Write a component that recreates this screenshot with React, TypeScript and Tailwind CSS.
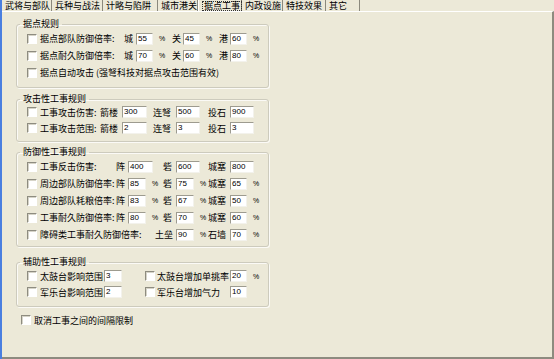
import React from "react";

const tabs = [
  { name: "武将与部队", w: "w-[50px]" },
  { name: "兵种与战法", w: "w-[51px]" },
  { name: "计略与陷阱", w: "w-[55px]" },
  { name: "城市港关", w: "w-[40px]" },
  { name: "据点工事", w: "w-[44px]", active: true },
  { name: "内政设施", w: "w-[41px]" },
  { name: "特技效果", w: "w-[43px]" },
  { name: "其它", w: "w-[34px]" },
];

const Check = ({ className = "" }: { className?: string }) => (
  <span
    className={`block h-[10px] w-[10px] shrink-0 border border-b-white border-l-[#8e8c80] border-r-white border-t-[#8e8c80] bg-white shadow-[inset_1px_1px_0_#d6d4c8] ${className}`}
  />
);

const Field = ({ value, w }: { value: string; w: string }) => (
  <span
    className={`flex h-[12px] shrink-0 items-center border border-b-[#f3f2ec] border-l-[#9d9b8f] border-r-[#f3f2ec] border-t-[#9d9b8f] bg-white pl-[1px] font-['Liberation_Sans',sans-serif] text-[8px] leading-none ${w}`}
  >
    {value}
  </span>
);

const Pct = ({ w = "w-[19px]" }: { w?: string }) => (
  <span className={`shrink-0 pl-[6px] font-['Liberation_Sans',sans-serif] text-[7px] ${w}`}>%</span>
);

const Txt = ({ children, w }: { children: React.ReactNode; w: string }) => (
  <span className={`shrink-0 whitespace-nowrap ${w}`}>{children}</span>
);

const Group = ({ title, className = "", children }: { title: string; className?: string; children: React.ReactNode }) => (
  <fieldset
    className={`w-[253px] rounded-[3px] border border-[#cdcbbd] shadow-[inset_1px_1px_0_#fbfaf6,1px_1px_0_#fbfaf6] ${className}`}
  >
    <legend className="ml-[3px] px-[3px] text-[9px] leading-[10px]">{title}</legend>
    <div className="pl-[10px]">{children}</div>
  </fieldset>
);

const Row = ({ h = "h-[17px]", children }: { h?: string; children: React.ReactNode }) => (
  <div className={`flex items-center ${h}`}>{children}</div>
);

export default function App() {
  return (
    <div className="flex h-[359px] w-[554px] flex-col overflow-hidden border-l-2 border-[#4a7fe0] bg-[#ece9d8] font-['Noto_Sans_CJK_SC','Noto_Sans',sans-serif] text-[9px] leading-none text-black">
      {/* tab strip */}
      <div className="flex h-[11px] items-stretch">
        {tabs.map((t) => (
          <div
            key={t.name}
            className={`flex ${t.w} items-center whitespace-nowrap pl-[3px] ${
              t.active
                ? "border-l border-r border-l-white border-r-[#716f64] bg-[#ece9d8]"
                : "border-r border-r-[#8b897d]"
            }`}
          >
            {t.active ? (
              <span className="border border-dotted border-[#333] px-[1px] leading-[8px]">{t.name}</span>
            ) : (
              t.name
            )}
          </div>
        ))}
      </div>

      {/* page */}
      <div className="flex flex-1 flex-col border-b-2 border-r-2 border-t border-b-[#8d8b7f] border-r-[#8d8b7f] border-t-white pl-[14px]">
        <Group title="据点规则" className="mt-[7px]">
          <div className="pb-[6px] pt-[1px]">
            <Row>
              <Check />
              <Txt w="ml-[3px] w-[84px]">据点部队防御倍率:</Txt>
              <Txt w="w-[12px]">城</Txt>
              <Field value="55" w="w-[17px]" />
              <Pct />
              <Txt w="w-[11px]">关</Txt>
              <Field value="45" w="w-[17px]" />
              <Pct />
              <Txt w="w-[11px]">港</Txt>
              <Field value="60" w="w-[17px]" />
              <Pct />
            </Row>
            <Row>
              <Check />
              <Txt w="ml-[3px] w-[84px]">据点耐久防御倍率:</Txt>
              <Txt w="w-[12px]">城</Txt>
              <Field value="70" w="w-[17px]" />
              <Pct />
              <Txt w="w-[11px]">关</Txt>
              <Field value="60" w="w-[17px]" />
              <Pct />
              <Txt w="w-[11px]">港</Txt>
              <Field value="80" w="w-[17px]" />
              <Pct />
            </Row>
            <Row>
              <Check />
              <Txt w="ml-[3px]">据点自动攻击 (强弩科技对据点攻击范围有效)</Txt>
            </Row>
          </div>
        </Group>

        <Group title="攻击性工事规则" className="mt-[6px]">
          <div className="pb-[5px]">
            {[
              { label: "工事攻击伤害:", a: "300", b: "500", c: "900" },
              { label: "工事攻击范围:", a: "2", b: "3", c: "3" },
            ].map((r) => (
              <Row key={r.label} h="h-[16px]">
                <Check />
                <Txt w="ml-[3px] w-[60px]">{r.label}</Txt>
                <Txt w="w-[22px]">箭楼</Txt>
                <Field value={r.a} w="w-[25px]" />
                <span className="w-[6px] shrink-0" />
                <Txt w="w-[23px]">连弩</Txt>
                <Field value={r.b} w="w-[24px]" />
                <span className="w-[8px] shrink-0" />
                <Txt w="w-[22px]">投石</Txt>
                <Field value={r.c} w="w-[24px]" />
              </Row>
            ))}
          </div>
        </Group>

        <Group title="防御性工事规则" className="mt-[5px]">
          <div className="pb-[3px] pt-[1px]">
            <Row>
              <Check />
              <Txt w="ml-[3px] w-[76px]">工事反击伤害:</Txt>
              <Txt w="w-[12px]">阵</Txt>
              <Field value="400" w="w-[25px]" />
              <span className="w-[10px] shrink-0" />
              <Txt w="w-[13px]">砦</Txt>
              <Field value="600" w="w-[24px]" />
              <span className="w-[8px] shrink-0" />
              <Txt w="w-[22px]">城塞</Txt>
              <Field value="800" w="w-[24px]" />
            </Row>
            {[
              { label: "周边部队防御倍率:", a: "85", b: "75", c: "65" },
              { label: "周边部队耗粮倍率:", a: "83", b: "67", c: "50" },
              { label: "工事耐久防御倍率:", a: "80", b: "70", c: "60" },
            ].map((r) => (
              <Row key={r.label}>
                <Check />
                <Txt w="ml-[3px] w-[76px]">{r.label}</Txt>
                <Txt w="w-[12px]">阵</Txt>
                <Field value={r.a} w="w-[18px]" />
                <Pct w="w-[17px]" />
                <Txt w="w-[13px]">砦</Txt>
                <Field value={r.b} w="w-[18px]" />
                <Pct w="w-[14px]" />
                <Txt w="w-[22px]">城塞</Txt>
                <Field value={r.c} w="w-[17px]" />
                <Pct />
              </Row>
            ))}
            <Row>
              <Check />
              <Txt w="ml-[3px] w-[115px]">障碍类工事耐久防御倍率:</Txt>
              <Txt w="w-[21px]">土垒</Txt>
              <Field value="90" w="w-[18px]" />
              <Pct w="w-[14px]" />
              <Txt w="w-[22px]">石墙</Txt>
              <Field value="70" w="w-[17px]" />
              <Pct />
            </Row>
          </div>
        </Group>

        <Group title="辅助性工事规则" className="mt-[10px]">
          <div className="pb-[6px] pt-[1px]">
            <Row h="h-[16px]">
              <Check />
              <Txt w="ml-[3px] w-[64px]">太鼓台影响范围</Txt>
              <Field value="3" w="w-[18px]" />
              <span className="w-[23px] shrink-0" />
              <Check />
              <Txt w="ml-[2px] w-[73px]">太鼓台增加单挑率</Txt>
              <Field value="20" w="w-[17px]" />
              <Pct />
            </Row>
            <Row h="h-[16px]">
              <Check />
              <Txt w="ml-[3px] w-[64px]">军乐台影响范围</Txt>
              <Field value="2" w="w-[18px]" />
              <span className="w-[23px] shrink-0" />
              <Check />
              <Txt w="ml-[2px] w-[73px]">军乐台增加气力</Txt>
              <Field value="10" w="w-[17px]" />
            </Row>
          </div>
        </Group>

        <div className="ml-[5px] mt-[6px] flex h-[14px] items-center">
          <Check />
          <span className="ml-[3px]">取消工事之间的间隔限制</span>
        </div>
      </div>
    </div>
  );
}
